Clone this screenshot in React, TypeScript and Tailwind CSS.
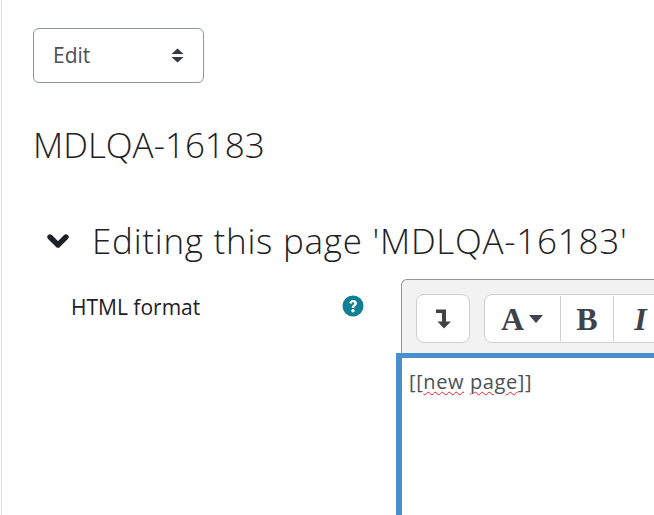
import React from 'react';
import { ChevronDown } from 'lucide-react';

const font = "font-['Open_Sans','Noto_Sans',sans-serif]";

function SortCaret() {
    return (
        <svg width="13" height="15" viewBox="0 0 13 15" className="text-[#343a40]">
            <path d="M6.5 0.5 L12.5 6 L0.5 6 Z M0.5 9 L12.5 9 L6.5 14.5 Z" fill="currentColor" />
        </svg>
    );
}

function HelpIcon() {
    return (
        <svg width="22" height="22" viewBox="0 0 22 22">
            <circle cx="11" cy="11" r="10.5" fill="#0f7f93" />
            <path d="M7.300 8.300 C7.500 6.300 9 5 11.200 5 C13.400 5 15 6.400 15 8.200 C15 10.800 12.300 10.800 12.300 12.800 H9.700 C9.700 9.800 12.200 9.800 12.200 8.400 C12.200 7.700 11.800 7.300 11.100 7.300 C10.300 7.300 9.900 7.800 9.800 8.700 Z" fill="#fff" />
            <circle cx="11" cy="15.700" r="1.700" fill="#fff" />
        </svg>
    );
}

function ReturnIcon() {
    return (
        <svg width="17" height="20" viewBox="0 0 17 20" fill="#3f4348">
            <path d="M1 0.500 H11 V12.500 H16 L9 19.500 L2.500 12.500 H7 V4 H1 Z" />
        </svg>
    );
}

export default function App() {
    return (
        <div className={`${font} h-[515px] w-[653px] overflow-hidden bg-white ml-px border-l border-[#dee2e6] pl-[31px] pt-7`}>
            <div className="flex h-[55px] w-[171px] items-center justify-between rounded-[6px] border border-[#8f959e] pl-[19px] pr-[19px] text-[21px] text-[#495057]">
                <span>Edit</span>
                <SortCaret />
            </div>

            <h2 className="mt-[36px] text-[35px] font-light leading-[52px] text-[#1d2125]">MDLQA-16183</h2>

            <div className="mt-[44px] flex items-center">
                <ChevronDown size={32} strokeWidth={4} className="ml-[9px] text-[#1d2125]" />
                <h3 className="ml-[18px] whitespace-nowrap text-[35px] font-light leading-[52px] tracking-[0.74px] text-[#1d2125]">Editing this page 'MDLQA-16183'</h3>
            </div>

            <div className="mt-[12px] flex">
                <div className="flex w-[363px] shrink-0 items-start justify-between pl-[38px] pr-[32px] pt-[13px]">
                    <span className="text-[21px] leading-[30px] text-[#1d2125]">HTML format</span>
                    <span className="mt-[3px]"><HelpIcon /></span>
                </div>

                <div className="w-[300px] shrink-0">
                    <div className="ml-[5px] flex h-[74px] gap-[14px] rounded-tl-[6px] border-l border-t border-[#8f959e] bg-[#f2f2f2] pl-[14px] pt-[14px]">
                        <div className="flex h-[49px] w-[54px] shrink-0 items-center justify-center rounded-[8px] border border-[#cfcfcf] bg-white">
                            <ReturnIcon />
                        </div>
                        <div className="flex h-[49px] w-[300px] shrink-0 rounded-[8px] border border-[#cfcfcf] bg-white font-['Liberation_Serif',serif] font-bold text-[#3f4348]">
                            <div className="my-[1px] flex w-[76px] items-center justify-center gap-[5px] border-r border-[#cfcfcf] pr-[1px] text-[32px]">
                                A
                                <svg width="14" height="8" viewBox="0 0 14 8" fill="#3f4348"><path d="M0 0 H14 L7 8 Z" /></svg>
                            </div>
                            <div className="my-[1px] flex w-[53px] items-center justify-center border-r border-[#cfcfcf] text-[32px]">B</div>
                            <div className="flex w-[53px] items-center justify-center text-[32px] italic">I</div>
                        </div>
                    </div>
                    <div className="h-[200px] border-l-[6px] border-t-[5px] border-[#4a8fcd] bg-white pl-[7px] pt-[10px]">
                        <span className="text-[20px] leading-[28px] tracking-[0.6px] text-[#495057]">
                            [[<span className="underline decoration-wavy decoration-[#e8212b] decoration-1 underline-offset-2">new</span> <span className="underline decoration-wavy decoration-[#e8212b] decoration-1 underline-offset-2">page</span>]]
                        </span>
                    </div>
                </div>
            </div>
        </div>
    );
}
